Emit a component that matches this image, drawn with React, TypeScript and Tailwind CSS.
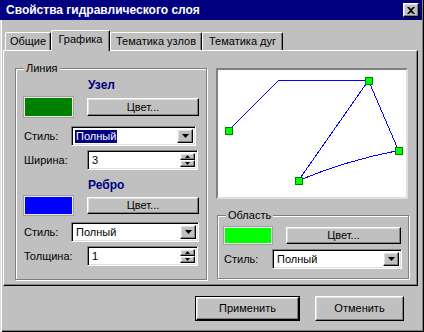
import React from 'react';

const font = { fontFamily: '"Liberation Sans", Arial, sans-serif' };

const raised =
    'border border-t-white border-l-white border-r-black border-b-black shadow-[inset_-1px_-1px_#808080,inset_1px_1px_#dfdfdf] bg-[#c0c0c0]';
const sunken =
    'border border-t-[#808080] border-l-[#808080] border-r-white border-b-white shadow-[inset_1px_1px_#000,inset_-1px_-1px_#dfdfdf] bg-white';

function Arrow({ up = false, size = 'lg' }: { up?: boolean; size?: 'lg' | 'sm' }) {
    const w = size === 'lg' ? 7 : 5;
    const h = size === 'lg' ? 4 : 3;
    return (
        <svg width={w} height={h} viewBox={`0 0 ${w} ${h}`} className="block">
            <polygon points={up ? `0,${h} ${w},${h} ${w / 2},0` : `0,0 ${w},0 ${w / 2},${h}`} fill="#000" />
        </svg>
    );
}

function Button({ label, className = '' }: { label: string; className?: string }) {
    return (
        <div className={`${raised} flex items-center justify-center text-[11px] text-black ${className}`}>{label}</div>
    );
}

function Select({ value, active = false, className = '' }: { value: string; active?: boolean; className?: string }) {
    return (
        <div className={`${sunken} flex items-stretch p-[2px] h-[20px] ${className}`}>
            <div className="flex-1 flex items-center pl-px">
                <span className={`px-px leading-[13px] text-[11px] ${active ? 'bg-[#000080] text-white' : 'text-black'}`}>
                    {value}
                </span>
            </div>
            <div className={`${raised} w-[16px] flex items-center justify-center`}>
                <Arrow />
            </div>
        </div>
    );
}

function Spin({ value, className = '' }: { value: string; className?: string }) {
    return (
        <div className={`${sunken} flex items-stretch p-[2px] h-[20px] ${className}`}>
            <div className="flex-1 flex items-center pl-[2px] text-[11px] text-black">{value}</div>
            <div className="w-[15px] flex flex-col">
                <div className={`${raised} flex-1 flex items-center justify-center`}>
                    <Arrow up size="sm" />
                </div>
                <div className={`${raised} flex-1 flex items-center justify-center`}>
                    <Arrow size="sm" />
                </div>
            </div>
        </div>
    );
}

function Group({ title, className = '', children }: { title: string; className?: string; children: React.ReactNode }) {
    return (
        <div
            className={`relative border border-[#808080] shadow-[1px_1px_0_#fff,inset_1px_1px_0_#fff] ${className}`}
        >
            <span className="absolute -top-[8px] left-[8px] bg-[#c0c0c0] px-[2px] text-[11px] leading-[14px] text-black">
                {title}
            </span>
            {children}
        </div>
    );
}

function Swatch({ color, className = '' }: { color: string; className?: string }) {
    return <div className={`border border-[#e8e8e8] shadow-[0_0_0_1px_#a0a0a0] ${color} ${className}`} />;
}

function Node({ x, y }: { x: number; y: number }) {
    return <rect x={x - 3.5} y={y - 3.5} width={7} height={7} fill="#00ff00" stroke="#008000" strokeWidth={1} />;
}

function Tab({ label, active = false, className = '' }: { label: string; active?: boolean; className?: string }) {
    return (
        <div
            className={`flex items-center justify-center text-[11px] text-black bg-[#c0c0c0] rounded-t-[2px] border-t border-l border-t-white border-l-white border-r border-r-black shadow-[inset_-1px_0_#808080] ${
                active ? 'h-[21px] -mb-px relative z-10 pb-[3px]' : 'h-[18px]'
            } ${className}`}
        >
            {label}
        </div>
    );
}

export default function App() {
    return (
        <div
            style={font}
            className="w-[424px] h-[332px] bg-[#c0c0c0] flex flex-col shadow-[inset_1px_0_#dfdfdf,inset_2px_0_#fff,inset_-1px_-1px_#000,inset_-2px_-2px_#808080] overflow-hidden"
        >
            {/* Title bar */}
            <div className="h-[20px] mr-[2px] bg-[#000080] flex items-center justify-between pl-[6px] pr-[3px]">
                <span className="text-white font-bold text-[12px]">Свойства гидравлического слоя</span>
                <div className={`${raised} w-[16px] h-[14px] flex items-center justify-center`}>
                    <svg width="8" height="7" viewBox="0 0 8 7">
                        <path d="M0 0h2l2 2 2-2h2L5 3.5 8 7H6L4 5 2 7H0l3-3.5z" fill="#000" />
                    </svg>
                </div>
            </div>

            {/* Tabs */}
            <div className="mt-[10px] h-[20px] flex items-end pl-[5px]">
                <Tab label="Общие" className="w-[46px]" />
                <Tab label="Графика" active className="w-[59px]" />
                <Tab label="Тематика узлов" className="w-[92px]" />
                <Tab label="Тематика дуг" className="w-[81px]" />
            </div>

            {/* Panel */}
            <div className="ml-[3px] w-[415px] h-[236px] border border-t-white border-l-white border-r-black border-b-black shadow-[inset_-1px_-1px_#808080] flex pt-[17px] pl-[11px] gap-[9px]">
                <Group title="Линия" className="w-[192px] h-[212px] flex flex-col pl-[8px]">
                    <div className="mt-[9px] h-[14px] pl-[64px] text-[12px] font-bold text-[#000080] leading-[14px]">Узел</div>
                    <div className="mt-[5px] h-[20px] flex items-center gap-[14px]">
                        <Swatch color="bg-[#008000]" className="w-[49px] h-[20px]" />
                        <Button label="Цвет..." className="w-[112px] h-[18px]" />
                    </div>
                    <div className="mt-[9px] flex items-center">
                        <span className="w-[47px] text-[11px]">Стиль:</span>
                        <Select value="Полный" active className="w-[125px]" />
                    </div>
                    <div className="mt-[4px] flex items-center">
                        <span className="w-[63px] text-[11px]">Ширина:</span>
                        <Spin value="3" className="w-[111px]" />
                    </div>
                    <div className="mt-[8px] h-[14px] pl-[64px] text-[12px] font-bold text-[#000080] leading-[14px]">Ребро</div>
                    <div className="mt-[4px] h-[19px] flex items-center gap-[14px]">
                        <Swatch color="bg-[#0000ff]" className="w-[49px] h-[19px]" />
                        <Button label="Цвет..." className="w-[112px] h-[17px]" />
                    </div>
                    <div className="mt-[7px] flex items-center">
                        <span className="w-[47px] text-[11px]">Стиль:</span>
                        <Select value="Полный" className="w-[128px]" />
                    </div>
                    <div className="mt-[4px] flex items-center">
                        <span className="w-[63px] text-[11px]">Толщина:</span>
                        <Spin value="1" className="w-[111px]" />
                    </div>
                </Group>

                <div className="w-[193px] flex flex-col">
                    {/* Preview */}
                    <div className="h-[131px] w-[192px] border-2 border-[#808080] border-r-[#dfdfdf] border-b-[#dfdfdf] bg-white">
                        <svg width="188" height="127" viewBox="0 0 188 127" className="block" shapeRendering="crispEdges">
                            <g fill="none" stroke="#0000ff" strokeWidth="1">
                                <polyline points="10.5,60.5 60.5,10.5 150.5,10.5" />
                                <line x1="150.5" y1="10.5" x2="80.5" y2="110.5" />
                                <line x1="150.5" y1="10.5" x2="180.5" y2="80.5" />
                                <path d="M80.5 110.5 Q130 90 180.5 80.5" />
                            </g>
                            <Node x={10.5} y={60.5} />
                            <Node x={150.5} y={10.5} />
                            <Node x={180.5} y={80.5} />
                            <Node x={80.5} y={110.5} />
                        </svg>
                    </div>

                    <Group title="Область" className="mt-[16px] ml-px w-[192px] h-[64px] flex flex-col pl-[6px]">
                        <div className="mt-[10px] h-[18px] flex items-center gap-[14px]">
                            <Swatch color="bg-[#00ff00]" className="w-[48px] h-[17px]" />
                            <Button label="Цвет..." className="w-[115px] h-[17px]" />
                        </div>
                        <div className="mt-[5px] flex items-center">
                            <span className="w-[48px] text-[11px]">Стиль:</span>
                            <Select value="Полный" className="w-[130px]" />
                        </div>
                    </Group>
                </div>
            </div>

            {/* Footer buttons */}
            <div className="mt-[10px] flex justify-end gap-[15px] pr-[20px]">
                <div className="border border-black">
                    <Button label="Применить" className="w-[103px] h-[23px]" />
                </div>
                <Button label="Отменить" className="w-[89px] h-[25px]" />
            </div>
        </div>
    );
}
